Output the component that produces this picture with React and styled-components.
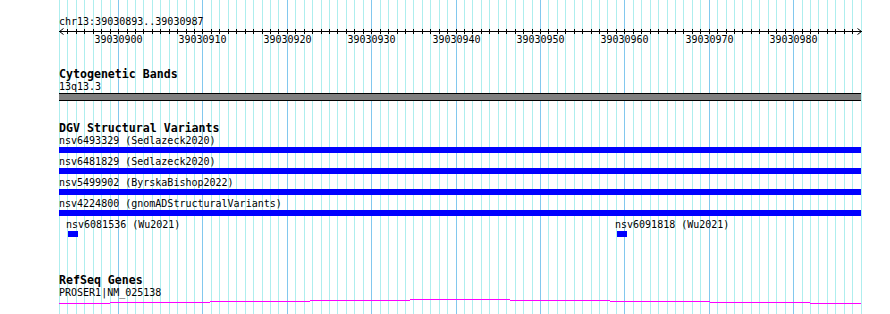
import React from 'react'
import styled, { createGlobalStyle } from 'styled-components'

const START = 39030893
const END = 39030987
const SCALE = 8.4375
const ORIGIN = 59
const TRACK_WIDTH = 802

const bpX = (pos) => Math.round((pos - START) * SCALE)

const GlobalStyle = createGlobalStyle`
  html, body {
    margin: 0;
    padding: 0;
    background: #fff;
  }
`

const Page = styled.div`
  position: relative;
  width: 890px;
  height: 314px;
  background: #fff;
  overflow: hidden;
  font-family: 'DejaVu Sans Mono', 'Liberation Mono', monospace;
  color: #000;
`

const GridLayer = styled.svg`
  position: absolute;
  left: 0;
  top: 0;
  width: 890px;
  height: 314px;
  shape-rendering: crispEdges;
`

const Panel = styled.div`
  position: relative;
  display: flex;
  flex-direction: column;
  padding: 15px 0 0 ${ORIGIN}px;
`

const Location = styled.div`
  font-size: 10px;
  line-height: 13px;
  white-space: pre;
`

const RulerSvg = styled.svg`
  display: block;
  width: ${TRACK_WIDTH}px;
  height: 20px;
  overflow: visible;
`

const Track = styled.section`
  display: flex;
  flex-direction: column;
  margin-top: ${({ $gap }) => $gap}px;
`

const TrackTitle = styled.h3`
  margin: 0;
  font-family: 'DejaVu Sans Mono', 'Liberation Mono', monospace;
  font-weight: bold;
  font-size: 11.6px;
  line-height: 12px;
  white-space: pre;
`

const Label = styled.div`
  font-size: 10px;
  line-height: 13px;
  white-space: pre;
`

const Band = styled.div`
  width: ${TRACK_WIDTH}px;
  height: 6px;
  background: #808080;
  border-top: 1px solid #000;
  border-bottom: 1px solid #000;
`

const Variant = styled.div`
  display: flex;
  flex-direction: column;
  margin-bottom: 2px;
`

const Bar = styled.div`
  width: ${({ $width }) => $width}px;
  height: 6px;
  margin-left: ${({ $inset }) => $inset || 0}px;
  background: #0000ff;
`

const PointRow = styled.div`
  position: relative;
  height: 19px;
`

const PointFeature = styled.div`
  position: absolute;
  top: 0;
  display: flex;
  flex-direction: column;
`

const GeneSvg = styled.svg`
  display: block;
  width: ${TRACK_WIDTH}px;
  height: 6px;
  shape-rendering: crispEdges;
`

const lineCount = END - START + 2

const Grid = () => (
  <GridLayer viewBox="0 0 890 314">
    {Array.from({ length: lineCount }, (_, i) => {
      const x = ORIGIN + bpX(START + i) + 0.5
      const major = (START + i) % 10 === 0
      return (
        <line
          key={i}
          x1={x}
          x2={x}
          y1={0}
          y2={314}
          stroke={major ? '#82c8ee' : '#aeeeee'}
          strokeWidth={1}
        />
      )
    })}
  </GridLayer>
)

const Ruler = () => {
  const last = bpX(START + lineCount - 1) + 0.5
  const labels = []
  for (let p = Math.ceil(START / 10) * 10; p <= END; p += 10) labels.push(p)
  return (
    <RulerSvg viewBox={`0 0 ${TRACK_WIDTH} 20`}>
      <g shapeRendering="crispEdges" stroke="#000" strokeWidth={1}>
        <line x1={0} x2={last} y1={3.5} y2={3.5} />
        {Array.from({ length: lineCount - 1 }, (_, i) => {
          if (i === 0) return null
          const x = bpX(START + i) + 0.5
          return <line key={i} x1={x} x2={x} y1={1} y2={6} />
        })}
      </g>
      <polyline points="4.5,0.5 0.5,3.5 4.5,6.5" fill="none" stroke="#000" strokeWidth={1} />
      <polyline
        points={`${last - 4},0.5 ${last},3.5 ${last - 4},6.5`}
        fill="none"
        stroke="#000"
        strokeWidth={1}
      />
      {labels.map((p) => (
        <text
          key={p}
          x={bpX(p) + 0.5}
          y={15}
          textAnchor="middle"
          fontFamily="'DejaVu Sans Mono', monospace"
          fontSize={10}
          fill="#000"
        >
          {p}
        </text>
      ))}
    </RulerSvg>
  )
}

const variants = [
  { id: 'nsv6493329', study: 'Sedlazeck2020' },
  { id: 'nsv6481829', study: 'Sedlazeck2020' },
  { id: 'nsv5499902', study: 'ByrskaBishop2022' },
  { id: 'nsv4224800', study: 'gnomADStructuralVariants' },
]

const points = [
  { id: 'nsv6081536', study: 'Wu2021', start: 39030894 },
  { id: 'nsv6091818', study: 'Wu2021', start: 39030959 },
]

// stepped transcript line, [x0, x1, y]
const geneSteps = [
  [0, 51, 4],
  [51, 151, 3],
  [151, 251, 2],
  [251, 351, 1],
  [351, 451, 0],
  [451, 551, 1],
  [551, 651, 2],
  [651, 751, 3],
  [751, 802, 4],
]

const App = () => (
  <>
    <GlobalStyle />
    <Page>
      <Grid />
      <Panel>
        <Location>chr13:39030893..39030987</Location>
        <Ruler />

        <Track $gap={20}>
          <TrackTitle>Cytogenetic Bands</TrackTitle>
          <Label>13q13.3</Label>
          <Band />
        </Track>

        <Track $gap={21}>
          <TrackTitle>DGV Structural Variants</TrackTitle>
          {variants.map((v) => (
            <Variant key={v.id}>
              <Label>{`${v.id} (${v.study})`}</Label>
              <Bar $width={TRACK_WIDTH} />
            </Variant>
          ))}
          <PointRow>
            {points.map((p) => (
              <PointFeature key={p.id} style={{ left: bpX(p.start) - 1 }}>
                <Label>{`${p.id} (${p.study})`}</Label>
                <Bar $width={10} $inset={2} />
              </PointFeature>
            ))}
          </PointRow>
        </Track>

        <Track $gap={37}>
          <TrackTitle>RefSeq Genes</TrackTitle>
          <Label>PROSER1|NM_025138</Label>
          <GeneSvg viewBox={`0 0 ${TRACK_WIDTH} 6`}>
            {geneSteps.map(([x0, x1, y]) => (
              <rect key={x0} x={x0} y={y} width={x1 - x0} height={1} fill="#ff00ff" />
            ))}
          </GeneSvg>
        </Track>
      </Panel>
    </Page>
  </>
)

export default App
